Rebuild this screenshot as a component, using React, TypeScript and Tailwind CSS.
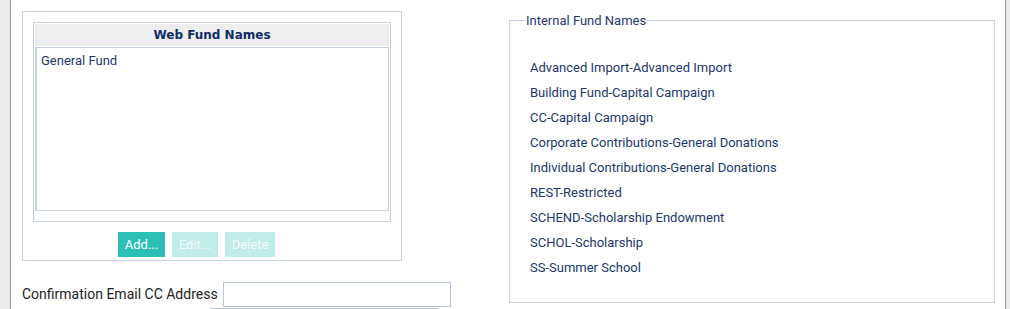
import React from 'react';

const internalFunds = [
  'Advanced Import-Advanced Import',
  'Building Fund-Capital Campaign',
  'CC-Capital Campaign',
  'Corporate Contributions-General Donations',
  'Individual Contributions-General Donations',
  'REST-Restricted',
  'SCHEND-Scholarship Endowment',
  'SCHOL-Scholarship',
  'SS-Summer School',
];

export default function App() {
  return (
    <div className="flex w-[1010px] h-[309px] overflow-hidden bg-[#ebebeb] font-['Roboto',sans-serif]">
      <div className="w-[10px] shrink-0" />
      <div className="flex-1 flex bg-white border-l border-r border-[#9a9a9a] pl-[11px] pt-[11px]">
        {/* left column */}
        <div className="w-[380px] shrink-0">
          <div className="h-[250px] border border-[#c5d1e3] px-[10px] pt-[10px]">
            <div className="h-[200px] border border-[#c5d1e3] p-px flex flex-col">
              <div className="h-[22px] bg-[#eeeeee] flex items-center justify-center text-[12px] font-bold text-[#0d2d66] font-['DejaVu_Sans',sans-serif]">
                Web Fund Names
              </div>
              <div className="mt-px h-[164px] border border-[#c5d1e3] border-l-2 pl-[4px] pt-[3px] text-[13px] text-[#1b376b]">
                General Fund
              </div>
            </div>
            <div className="flex gap-[7px] pl-[85px] mt-[10px]">
              <button className="h-[25px] w-[47px] bg-[#2cbfb6] text-white text-[13px]">Add...</button>
              <button className="h-[25px] w-[46px] bg-[#c0ecea] text-[#f4fbfb] text-[13px]">Edit...</button>
              <button className="h-[25px] w-[50px] bg-[#c0ecea] text-[#f4fbfb] text-[13px]">Delete</button>
            </div>
          </div>
          <div className="flex items-center mt-[21px] w-max">
            <span className="shrink-0 whitespace-nowrap text-[14px] text-[#222222]">Confirmation Email CC Address</span>
            <input className="shrink-0 ml-[5px] h-[25px] w-[228px] border border-[#b8c4da] outline-none" />
          </div>
          <div className="ml-[188px] mt-px h-[20px] w-[228px] border border-[#b8c4da]" />
        </div>

        {/* right column */}
        <fieldset className="ml-[107px] mt-[2px] w-[486px] h-[290px] border border-[#c5d1e3] pl-[16px] pr-[16px] self-start">
          <legend className="text-[13px] leading-[15px] text-[#1f3a6a]">Internal Fund Names</legend>
          <ul className="pl-[4px] pt-[27px]">
            {internalFunds.map(f => (
              <li key={f} className="h-[25px] leading-[25px] text-[13px] text-[#1b376b]">{f}</li>
            ))}
          </ul>
        </fieldset>
      </div>
      <div className="w-[4px] shrink-0" />
    </div>
  );
}
